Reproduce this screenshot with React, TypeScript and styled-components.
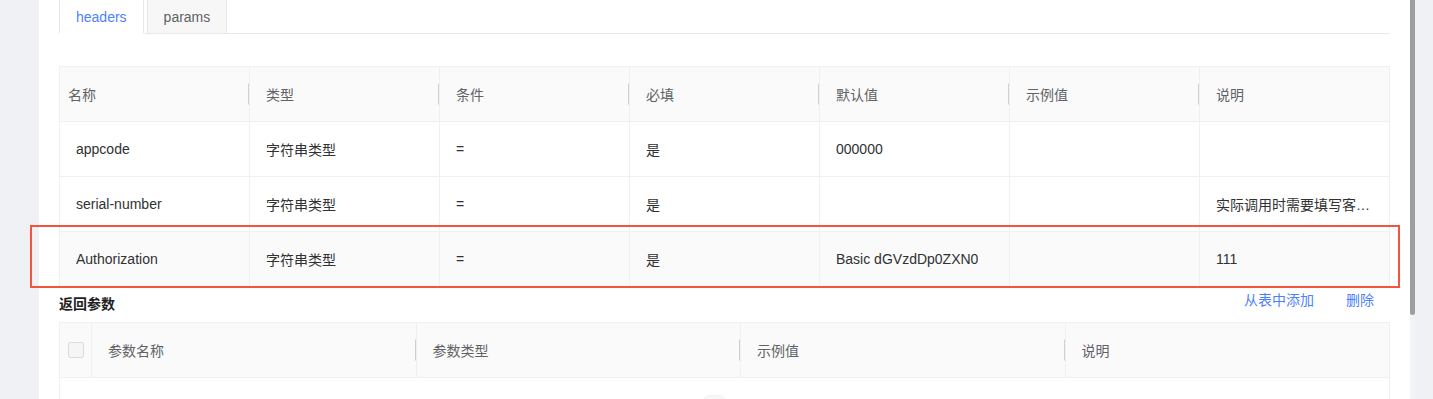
import React from "react";
import styled, { createGlobalStyle } from "styled-components";

const GlobalStyle = createGlobalStyle`
  html, body {
    margin: 0;
    padding: 0;
    background: #f0f2f5;
    overflow: hidden;
  }
  * {
    box-sizing: border-box;
  }
  body {
    font-family: "Liberation Sans", "Noto Sans CJK SC", sans-serif;
    font-size: 14px;
    color: #303133;
  }
`;

const Page = styled.div`
  display: flex;
  height: 399px;
`;
const Gutter = styled.div<{ $w: number }>`
  flex: 0 0 ${(p) => p.$w}px;
  background: #f0f1f5;
`;
const Card = styled.div`
  flex: 0 0 1371px;
  background: #fff;
  padding: 0 20px;
  position: relative;
`;
const Scrollbar = styled.div`
  flex: 0 0 5px;
  display: flex;
  flex-direction: column;
  background: #f3f3f5;
`;
const Thumb = styled.div`
  height: 315px;
  background: #9e9e9e;
  border-radius: 0 0 3px 3px;
`;

const TabBar = styled.div`
  display: flex;
  height: 34px;
  border-bottom: 1px solid #e8e8e8;
`;
const Tab = styled.div<{ $active?: boolean }>`
  height: 34px;
  padding: 0 16px;
  margin-right: 3px;
  display: flex;
  align-items: center;
  justify-content: center;
  border: 1px solid #e8e8e8;
  border-top: none;
  border-bottom: ${(p) => (p.$active ? "1px solid #fff" : "1px solid #e8e8e8")};
  background: ${(p) => (p.$active ? "#fff" : "#f7f7f7")};
  color: ${(p) => (p.$active ? "#4d7fff" : "#606266")};
  font-size: 14px;
`;

const TableWrap = styled.div<{ $cols: string; $mt?: number }>`
  position: relative;
  display: grid;
  grid-template-columns: ${(p) => p.$cols};
  border-top: 1px solid #f0f0f0;
  border-left: 1px solid #f0f0f0;
  margin-top: ${(p) => p.$mt ?? 0}px;
`;
const HeadCell = styled.div<{ $sep?: boolean; $pl?: number; $center?: boolean }>`
  position: relative;
  height: 55px;
  display: flex;
  align-items: center;
  justify-content: ${(p) => (p.$center ? "center" : "flex-start")};
  padding-left: ${(p) => p.$pl ?? 16}px;
  background: #fafafa;
  color: #606266;
  border-right: 1px solid #f0f0f0;
  border-bottom: 1px solid #f0f0f0;
  &::before {
    content: "";
    display: ${(p) => (p.$sep ? "block" : "none")};
    position: absolute;
    right: 0;
    top: 50%;
    width: 1px;
    height: 21px;
    transform: translateY(-50%);
    background: #ccd0d8;
  }
`;
const Cell = styled.div<{ $bg?: boolean }>`
  height: 55px;
  display: flex;
  align-items: center;
  padding: 0 16px;
  background: ${(p) => (p.$bg ? "#fafafa" : "#fff")};
  color: #303133;
  border-right: 1px solid #f0f0f0;
  border-bottom: 1px solid #f0f0f0;
  white-space: nowrap;
  overflow: hidden;
`;
const Ellipsis = styled.span`
  overflow: hidden;
  text-overflow: ellipsis;
  white-space: nowrap;
`;
const EmptyCell = styled.div`
  grid-column: 1 / -1;
  height: 120px;
  border-right: 1px solid #f0f0f0;
  display: flex;
  justify-content: center;
  padding-top: 17px;
`;
const Highlight = styled.div`
  position: absolute;
  left: -30px;
  top: 158px;
  width: 1370px;
  height: 63px;
  border: 2px solid #f4533d;
  pointer-events: none;
`;

const ToolRow = styled.div`
  height: 35px;
  display: flex;
  align-items: center;
  justify-content: space-between;
`;
const SectionTitle = styled.div`
  font-weight: bold;
  font-size: 14px;
  color: #1f1f1f;
  padding-bottom: 4px;
`;
const Actions = styled.div`
  display: flex;
  padding-bottom: 12px;
`;
const LinkBtn = styled.span`
  color: #4d7fff;
  padding: 0 16px;
  cursor: pointer;
`;
const Checkbox = styled.span`
  width: 16px;
  height: 16px;
  border: 1px solid #dcdcdc;
  border-radius: 2px;
  background: #f5f5f5;
`;

const headerCols = ["名称", "类型", "条件", "必填", "默认值", "示例值", "说明"];
const rows = [
  ["appcode", "字符串类型", "=", "是", "000000", "", ""],
  ["serial-number", "字符串类型", "=", "是", "", "", "实际调用时需要填写客户的流水号"],
  ["Authorization", "字符串类型", "=", "是", "Basic dGVzdDp0ZXN0", "", "111"],
];
const returnCols = ["参数名称", "参数类型", "示例值", "说明"];

export default function App() {
  return (
    <>
      <GlobalStyle />
      <Page>
        <Gutter $w={39} />
        <Card>
          <TabBar>
            <Tab $active>headers</Tab>
            <Tab>params</Tab>
          </TabBar>

          <TableWrap $cols="repeat(7, 1fr)" $mt={32}>
            {headerCols.map((h, i) => (
              <HeadCell key={h} $sep={i < headerCols.length - 1} $pl={i === 0 ? 8 : 16}>
                {h}
              </HeadCell>
            ))}
            {rows.map((r, ri) =>
              r.map((v, ci) => (
                <Cell key={`${ri}-${ci}`} $bg={ri === 2}>
                  <Ellipsis>{v}</Ellipsis>
                </Cell>
              ))
            )}
            <Highlight />
          </TableWrap>

          <ToolRow>
            <SectionTitle>返回参数</SectionTitle>
            <Actions>
              <LinkBtn>从表中添加</LinkBtn>
              <LinkBtn>删除</LinkBtn>
            </Actions>
          </ToolRow>

          <TableWrap $cols="32px repeat(4, 1fr)">
            <HeadCell $center $pl={0}>
              <Checkbox />
            </HeadCell>
            {returnCols.map((h, i) => (
              <HeadCell key={h} $sep={i < returnCols.length - 1}>
                {h}
              </HeadCell>
            ))}
            <EmptyCell>
              {/* empty-state picture, only its top edge is in view */}
              <svg width="64" height="41" viewBox="0 0 64 41" style={{ marginLeft: -10 }}>
                <g fill="none" fillRule="evenodd">
                  <ellipse cx="32" cy="33" rx="32" ry="7" fill="#f5f5f5" />
                  <path
                    d="M20 0h12c1 0 2 .5 2.5 1.3L44 12v10H9V12l9.5-10.7C19 .5 19.5 0 20 0z"
                    fill="#f7f7f7"
                    stroke="#f0f0f0"
                  />
                </g>
              </svg>
            </EmptyCell>
          </TableWrap>
        </Card>
        <Scrollbar>
          <Thumb />
        </Scrollbar>
        <Gutter $w={18} />
      </Page>
    </>
  );
}
